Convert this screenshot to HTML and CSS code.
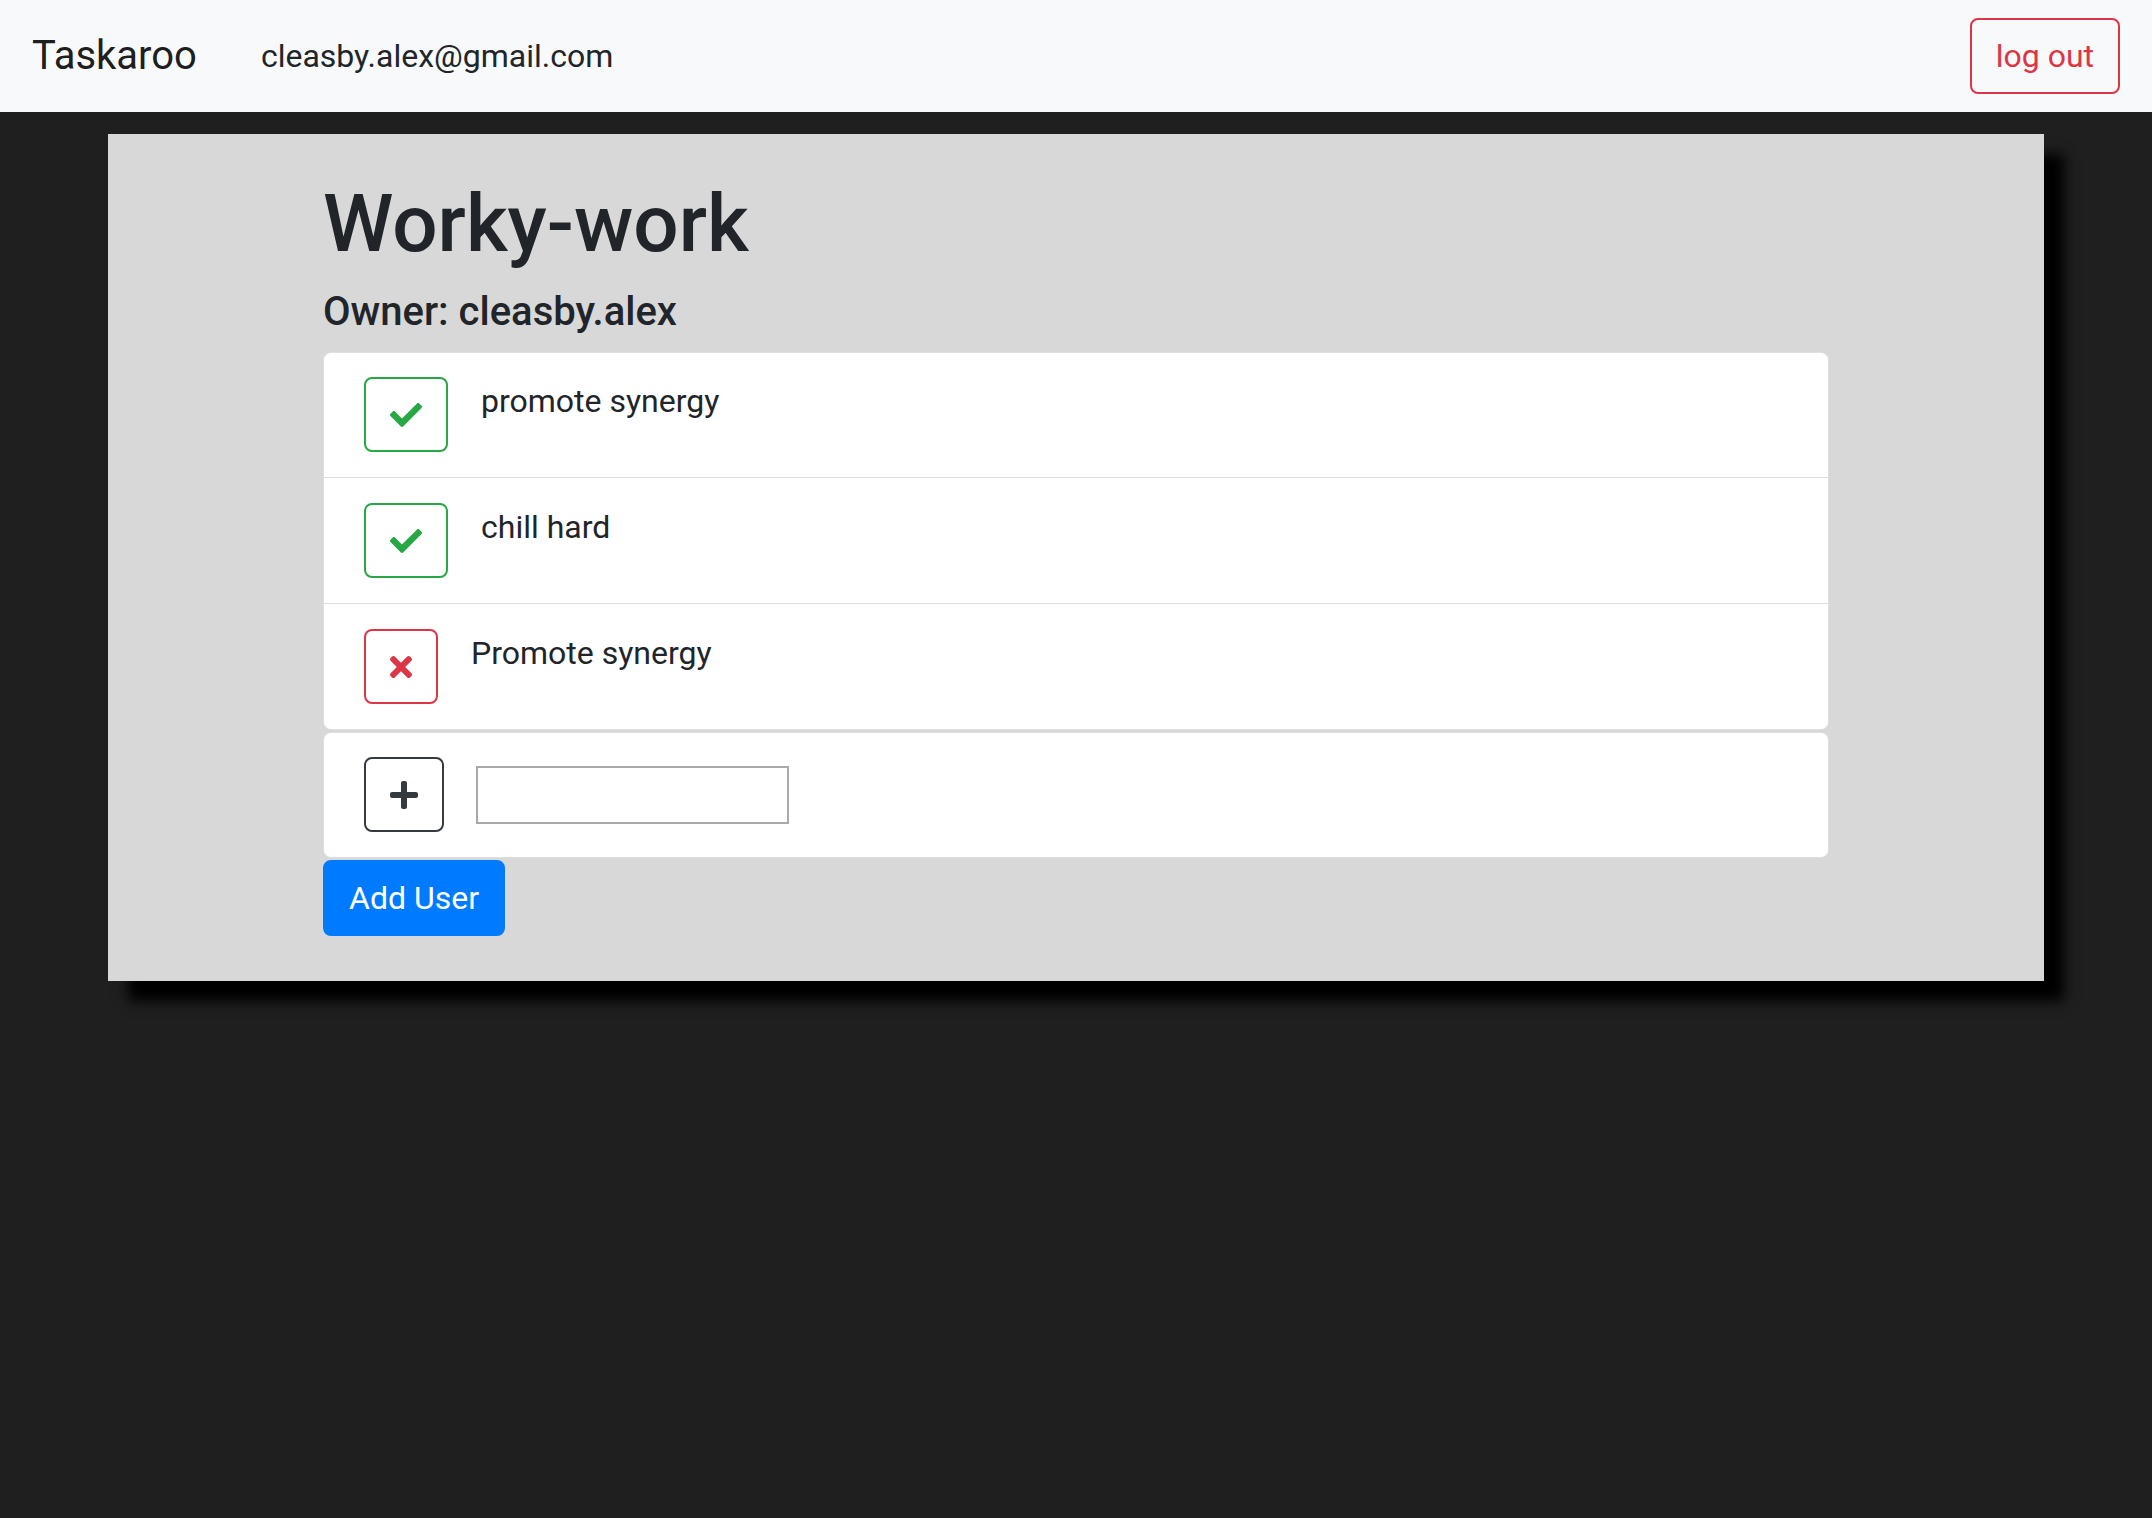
FILE: index.html
```html
<!DOCTYPE html>
<html>
<head>
<meta charset="utf-8">
<title>Taskaroo</title>
<link rel="stylesheet" href="styles.css">
</head>
<body>
<nav class="navbar">
  <span class="brand">Taskaroo</span>
  <span class="user-email">cleasby.alex@gmail.com</span>
  <button class="btn btn-outline-danger logout">log out</button>
</nav>
<main class="panel">
  <h1 class="title">Worky-work</h1>
  <h5 class="owner">Owner: cleasby.alex</h5>
  <ul class="task-list">
    <li class="task-item">
      <button class="btn btn-outline-success icon-btn">
        <svg class="ico" width="32" height="32" viewBox="0 0 512 512"><path fill="currentColor" d="M173.898 439.404l-166.4-166.4c-9.997-9.997-9.997-26.206 0-36.204l36.203-36.204c9.997-9.998 26.207-9.998 36.204 0L192 312.69 432.095 72.596c9.997-9.997 26.207-9.997 36.204 0l36.203 36.204c9.997 9.997 9.997 26.206 0 36.204l-294.4 294.401c-9.998 9.997-26.207 9.997-36.204-.001z"/></svg>
      </button>
      <span class="task-text">promote synergy</span>
    </li>
    <li class="task-item">
      <button class="btn btn-outline-success icon-btn">
        <svg class="ico" width="32" height="32" viewBox="0 0 512 512"><path fill="currentColor" d="M173.898 439.404l-166.4-166.4c-9.997-9.997-9.997-26.206 0-36.204l36.203-36.204c9.997-9.998 26.207-9.998 36.204 0L192 312.69 432.095 72.596c9.997-9.997 26.207-9.997 36.204 0l36.203 36.204c9.997 9.997 9.997 26.206 0 36.204l-294.4 294.401c-9.998 9.997-26.207 9.997-36.204-.001z"/></svg>
      </button>
      <span class="task-text">chill hard</span>
    </li>
    <li class="task-item">
      <button class="btn btn-outline-danger icon-btn">
        <svg class="ico" width="22" height="32" viewBox="0 0 352 512"><path fill="currentColor" d="M242.72 256l100.07-100.07c12.28-12.28 12.28-32.19 0-44.48l-22.24-22.24c-12.28-12.28-32.19-12.28-44.48 0L176 189.28 75.93 89.21c-12.28-12.28-32.19-12.28-44.48 0L9.21 111.450c-12.28 12.28-12.28 32.19 0 44.48L109.28 256 9.21 356.07c-12.28 12.28-12.28 32.19 0 44.48l22.24 22.24c12.28 12.28 32.2 12.28 44.48 0L176 322.72l100.07 100.07c12.28 12.28 32.2 12.28 44.48 0l22.24-22.24c12.28-12.28 12.28-32.19 0-44.48L242.72 256z"/></svg>
      </button>
      <span class="task-text">Promote synergy</span>
    </li>
  </ul>
  <div class="add-card">
    <button class="btn btn-outline-dark icon-btn">
      <svg class="ico" width="28" height="32" viewBox="0 0 448 512"><path fill="currentColor" d="M416 208H272V64c0-17.67-14.33-32-32-32h-32c-17.67 0-32 14.33-32 32v144H32c-17.67 0-32 14.33-32 32v32c0 17.67 14.33 32 32 32h144v144c0 17.67 14.33 32 32 32h32c17.67 0 32-14.33 32-32V304h144c17.67 0 32-14.33 32-32v-32c0-17.67-14.33-32-32-32z"/></svg>
    </button>
    <input class="new-task" type="text">
  </div>
  <button class="btn btn-primary add-user">Add User</button>
</main>
</body>
</html>
```

FILE: styles.css
```css
* { box-sizing: border-box; }

html, body {
  margin: 0;
  padding: 0;
}

body {
  background: #1f1f1f;
  font-family: Roboto, "Noto Sans", "Liberation Sans", sans-serif;
  font-size: 32px;
  line-height: 1.5;
  color: #212529;
  min-height: 1518px;
  overflow: hidden;
}

.navbar {
  display: flex;
  align-items: center;
  background: #f8f9fa;
  height: 112px;
  padding: 16px 32px;
}

.brand {
  font-size: 40px;
  line-height: 60px;
  padding: 10px 0;
  color: rgba(0, 0, 0, 0.9);
  margin-right: 64px;
}

.user-email {
  font-size: 32px;
  line-height: 48px;
  color: #212529;
}

.btn {
  font-family: inherit;
  font-size: 32px;
  line-height: 48px;
  padding: 12px 24px;
  border: 2px solid transparent;
  border-radius: 8px;
  background: transparent;
  cursor: pointer;
  font-weight: 400;
}

.logout {
  margin-left: auto;
}

.btn-outline-danger {
  color: #dc3545;
  border-color: #dc3545;
}

.btn-outline-success {
  color: #28a745;
  border-color: #28a745;
}

.btn-outline-dark {
  color: #343a40;
  border-color: #343a40;
}

.btn-primary {
  background: #007bff;
  border-color: #007bff;
  color: #fff;
}

.panel {
  background: #d8d8d8;
  margin: 22px 108px 0;
  padding: 42px 215px 45px;
  box-shadow: 20px 20px 12px #000;
}

.title {
  font-size: 80px;
  font-weight: 500;
  line-height: 96px;
  margin: 0 0 16px;
  color: #212529;
}

.owner {
  font-size: 40px;
  font-weight: 500;
  line-height: 48px;
  margin: 0 0 16px;
  color: #212529;
}

.task-list {
  list-style: none;
  margin: 0;
  padding: 0;
  background: #fff;
  border: 1px solid rgba(0, 0, 0, 0.125);
  border-radius: 8px;
}

.task-item {
  display: flex;
  align-items: flex-start;
  padding: 25px 40px;
  border-top: 1px solid rgba(0, 0, 0, 0.125);
}

.task-item:first-child {
  border-top: none;
  padding-top: 24px;
}

.icon-btn {
  display: flex;
  align-items: center;
  justify-content: center;
  height: 75px;
}

.ico {
  display: block;
}

.task-text {
  margin-left: 33px;
  line-height: 48px;
}

.add-card {
  display: flex;
  align-items: center;
  margin-top: 2px;
  padding: 24px 40px 25px;
  background: #fff;
  border: 1px solid rgba(0, 0, 0, 0.125);
  border-radius: 8px;
}

.new-task {
  margin-left: 32px;
  width: 313px;
  height: 58px;
  border: 2px solid #a9a9a9;
  border-radius: 0;
  background: #fff;
  font-size: 32px;
}

.add-user {
  display: block;
  margin-top: 2px;
}
```
